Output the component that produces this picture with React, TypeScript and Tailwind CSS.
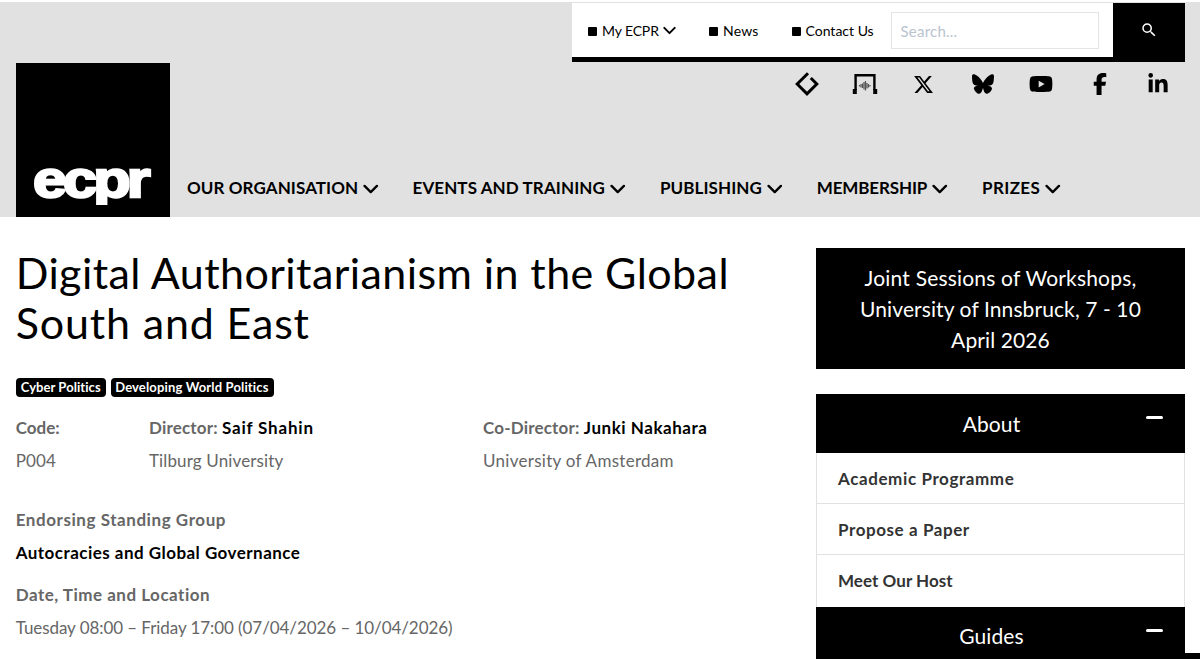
import { FaXTwitter, FaBluesky, FaYoutube, FaFacebookF, FaLinkedinIn } from "react-icons/fa6";
import { MdSearch } from "react-icons/md";

function Chevron({ className }: { className: string }) {
  return (
    <svg viewBox="0 0 16 10" className={className} fill="none" stroke="currentColor" strokeWidth="2.4" strokeLinecap="round" strokeLinejoin="round">
      <path d="M1.6 1.8 8 8.2l6.4-6.4" />
    </svg>
  );
}

function LoopIcon() {
  return (
    <svg viewBox="0 0 24 24" className="h-6 w-6" fill="none" stroke="#000" strokeWidth="3">
      <path d="M13 1.2 2.2 12 12 21.8 21.8 12l-6-6" />
    </svg>
  );
}

function HouseIcon() {
  return (
    <svg viewBox="0 0 26 22" className="h-[22px] w-[26px]" fill="none" stroke="#000">
      <path strokeWidth="2.4" d="M3.6 17V2.2h18.8V17" />
      <path fill="#000" stroke="none" d="M.8 16h4v5h-4zM21.2 16h4v5h-4z" />
      <path stroke="#555" strokeWidth="1.2" d="M7.5 12v1.4M9 11v3.4M10.5 10.5v4.6M12 9v7.5M13.5 8v9.5M15 10v5.5M16.5 11v3.4M18 12v1.4" />
    </svg>
  );
}

const nav = [
  { label: "OUR ORGANISATION", cls: "w-[225.5px] tracking-[0.09px]" },
  { label: "EVENTS AND TRAINING", cls: "w-[247.5px] tracking-[0.1px]" },
  { label: "PUBLISHING", cls: "w-[156.8px] tracking-[0.08px]" },
  { label: "MEMBERSHIP", cls: "w-[165.2px] tracking-[-0.14px]" },
  { label: "PRIZES", cls: "w-[90px] tracking-[0.4px]" },
];

function Square() {
  return <span className="mt-[2px] mr-[5px] h-[9px] w-[9px] rounded-[1px] bg-black" />;
}

function TopBar() {
  return (
    <div className="ml-auto mr-[15px] flex h-[59px] w-[613px]">
      <div className="flex h-[59px] w-[541px] items-center border-b-[5px] border-black bg-white pl-4 text-[14px] text-black">
        <a className="flex w-[121px] items-center">
          <Square />
          <span className="tracking-[-0.13px]">My ECPR</span>
          <Chevron className="ml-[4px] h-[9px] w-[13px]" />
        </a>
        <a className="flex w-[82.5px] items-center">
          <Square />
          <span className="tracking-[0.2px]">News</span>
        </a>
        <a className="flex w-[99px] items-center">
          <Square />
          <span>Contact Us</span>
        </a>
        <div className="flex h-[37px] w-[208.5px] items-center border border-[#e2e4e6] pt-[2px] pl-[9px] text-[15px] tracking-[0.22px] text-[#b9c3cf]">
          Search...
        </div>
      </div>
      <button className="flex h-[59px] w-[72px] items-center justify-center bg-black pb-[5px] text-white">
        <MdSearch className="h-[18px] w-[18px]" />
      </button>
    </div>
  );
}

function Header() {
  return (
    <header className="mt-[2px] h-[215px] bg-[#e1e1e1] pt-px">
      <TopBar />
      <div className="mt-px flex h-[154px] pl-4">
        <div className="flex h-[154px] w-[154px] shrink-0 items-end bg-black pl-[17px] pb-[12px]">
          <div className="h-[40px] w-[130px] overflow-hidden">
            <span className="block origin-left scale-x-[1.18] font-['Liberation_Sans'] text-[52px] leading-[28px] font-bold tracking-[-3.4px] text-white [-webkit-text-stroke:2.4px_white]">ecpr</span>
          </div>
        </div>
        <div className="flex flex-1 flex-col justify-between">
          <div className="flex h-[42px] items-center justify-end gap-[31.6px] pr-[28.2px] text-black">
            <span className="flex w-[27px] justify-center"><LoopIcon /></span>
            <span className="flex w-[27px] justify-center"><HouseIcon /></span>
            <span className="flex w-[27px] justify-center"><FaXTwitter className="h-[21px] w-[21px]" /></span>
            <span className="flex w-[27px] justify-center"><FaBluesky className="h-[22px] w-[22px]" /></span>
            <span className="flex w-[27px] justify-center"><FaYoutube className="h-[24px] w-[24px]" /></span>
            <span className="flex w-[27px] justify-center"><FaFacebookF className="h-[22px] w-[22px]" /></span>
            <span className="flex w-[27px] justify-center"><FaLinkedinIn className="mb-px h-[22px] w-[22px]" /></span>
          </div>
          <nav className="flex pb-[16px] pl-[17px] text-[17px] leading-[26px] font-bold text-black">
            {nav.map((n) => (
              <a key={n.label} className={`flex items-center ${n.cls}`}>
                <span>{n.label}</span>
                <Chevron className="mt-px ml-[5px] h-[10px] w-[15.5px]" />
              </a>
            ))}
          </nav>
        </div>
      </div>
    </header>
  );
}

function Main() {
  return (
    <main className="w-[800px] pl-[15.7px] text-[17px] leading-[33.3px] text-[#666]">
      <h1 className="mt-[31px] text-[43px] leading-[50px] text-black">
        <span className="block tracking-[0.42px]">Digital Authoritarianism in the Global</span>
        <span className="block tracking-[0.84px]">South and East</span>
      </h1>
      <div className="mt-[30px] flex gap-[5px] text-[13px] leading-[19px] font-bold text-white">
        <span className="h-[19px] w-[90px] rounded-[4px] bg-black pl-[5px] tracking-[0.06px]">Cyber Politics</span>
        <span className="h-[19px] w-[163px] rounded-[4px] bg-black pl-[4.5px] tracking-[0.15px]">Developing World Politics</span>
      </div>
      <div className="mt-[14px] flex">
        <div className="w-[133.3px]">
          <p className="font-bold">Code:</p>
          <p className="tracking-[0.12px]">P004</p>
        </div>
        <div className="w-[334px]">
          <p className="font-bold tracking-[0.17px]">Director: <span className="tracking-[0.8px] text-black">Saif Shahin</span></p>
          <p className="tracking-[0.13px]">Tilburg University</p>
        </div>
        <div>
          <p className="font-bold tracking-[0.18px]">Co-Director: <span className="tracking-[0.54px] text-black">Junki Nakahara</span></p>
          <p className="tracking-[0.29px]">University of Amsterdam</p>
        </div>
      </div>
      <p className="mt-[25px] font-bold tracking-[0.56px]">Endorsing Standing Group</p>
      <p className="font-bold tracking-[0.47px] text-black">Autocracies and Global Governance</p>
      <p className="mt-[8.5px] font-bold tracking-[0.5px]">Date, Time and Location</p>
      <p className="tracking-[-0.07px]">Tuesday 08:00 – Friday 17:00 (07/04/2026 – 10/04/2026)</p>
    </main>
  );
}

function PanelTitle({ title }: { title: string }) {
  return (
    <div className="flex h-[58.5px] items-center bg-black text-[21px] text-white">
      <span className="ml-[21px] flex-1 text-center tracking-[0.1px]">{title}</span>
      <span className="mr-[22px] mb-[11px] h-[3px] w-[17px] rounded-full bg-white" />
    </div>
  );
}

function Sidebar() {
  return (
    <aside className="mt-[31px] ml-[16px] h-[411px] w-[369px] overflow-hidden">
      <div className="h-[121px] bg-black pt-[14px] text-center text-[21px] leading-[31px] text-white">
        <p className="tracking-[0.19px]">Joint Sessions of Workshops,</p>
        <p className="tracking-[0.1px]">University of Innsbruck, 7 - 10</p>
        <p className="tracking-[0.11px]">April 2026</p>
      </div>
      <div className="mt-[25px]">
        <PanelTitle title="About" />
        <ul className="border-x border-[#e1e1e1] text-[17px] leading-[52px] font-bold text-[#333]">
          <li className="h-[51.4px] border-b border-[#e1e1e1] pl-[21px] tracking-[0.6px]">Academic Programme</li>
          <li className="h-[51.4px] border-b border-[#e1e1e1] pl-[21px] tracking-[0.58px]">Propose a Paper</li>
          <li className="h-[51.4px] pl-[21px] tracking-[0.05px]">Meet Our Host</li>
        </ul>
        <PanelTitle title="Guides" />
      </div>
    </aside>
  );
}

export default function App() {
  return (
    <div className="flex h-[659px] w-[1200px] flex-col overflow-hidden bg-white font-[Lato,sans-serif]">
      <Header />
      <div className="flex">
        <Main />
        <Sidebar />
        <div className="mt-auto h-[6px] flex-1 bg-black" />
      </div>
    </div>
  );
}
